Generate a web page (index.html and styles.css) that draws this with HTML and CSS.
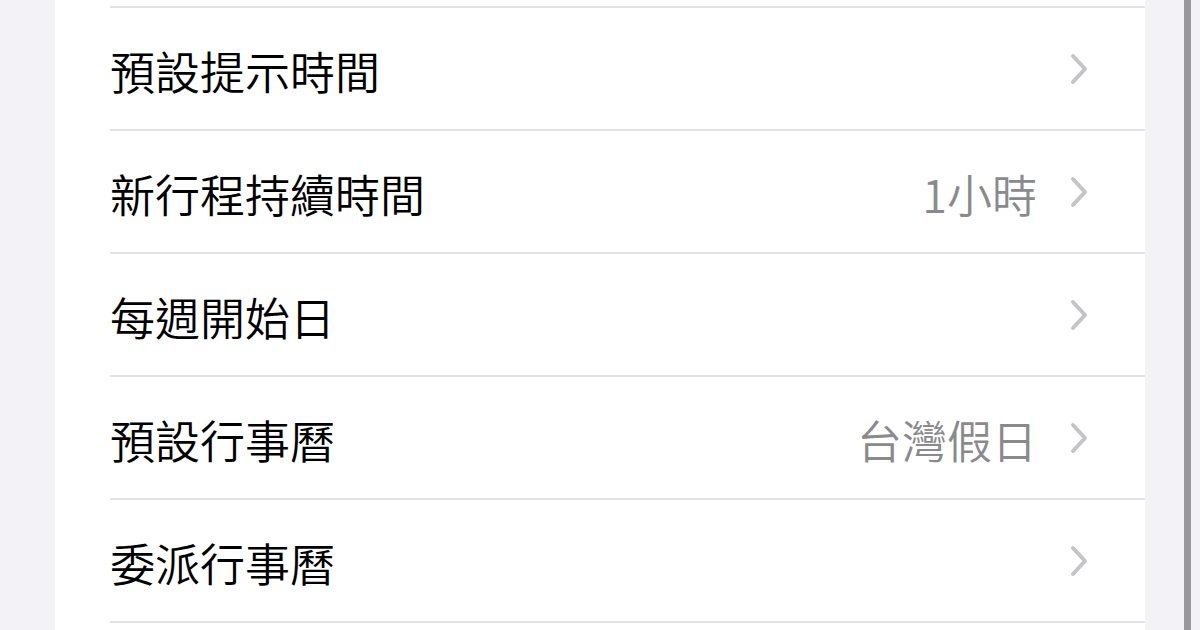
FILE: index.html
```html
<!DOCTYPE html>
<html lang="zh-Hant">
  <head>
    <meta charset="UTF-8" />
    <title>行事曆設定</title>
    <link rel="stylesheet" href="styles.css">
  </head>
  <body>
    <div class="page">
      <div class="card">
        <div class="row">
          <div class="row-inner">
            <span class="label">預設提示時間</span>
            <span class="value"></span>
            <svg class="chevron" viewBox="0 0 18 32"><path d="M3 3 L15 16 L3 29" /></svg>
          </div>
        </div>
        <div class="row">
          <div class="row-inner">
            <span class="label">新行程持續時間</span>
            <span class="value">1小時</span>
            <svg class="chevron" viewBox="0 0 18 32"><path d="M3 3 L15 16 L3 29" /></svg>
          </div>
        </div>
        <div class="row">
          <div class="row-inner">
            <span class="label">每週開始日</span>
            <span class="value"></span>
            <svg class="chevron" viewBox="0 0 18 32"><path d="M3 3 L15 16 L3 29" /></svg>
          </div>
        </div>
        <div class="row">
          <div class="row-inner">
            <span class="label">預設行事曆</span>
            <span class="value">台灣假日</span>
            <svg class="chevron" viewBox="0 0 18 32"><path d="M3 3 L15 16 L3 29" /></svg>
          </div>
        </div>
        <div class="row">
          <div class="row-inner">
            <span class="label">委派行事曆</span>
            <span class="value"></span>
            <svg class="chevron" viewBox="0 0 18 32"><path d="M3 3 L15 16 L3 29" /></svg>
          </div>
        </div>
        <div class="row">
          <div class="row-inner"></div>
        </div>
      </div>
    </div>
    <div class="scrollbar"></div>
  </body>
</html>
```

FILE: styles.css
```css
body {
  margin: 0;
  background-color: #f2f2f7;
  font-family: "Noto Sans CJK TC", "Noto Sans", sans-serif;
  height: 630px;
  overflow: hidden;
}
.page {
  padding-left: 55px;
}
.card {
  width: 1090px;
  background-color: #fff;
  padding-top: 6px;
  height: 624px;
  overflow: hidden;
}
.row {
  padding-left: 55px;
}
.row-inner {
  display: flex;
  align-items: center;
  height: 121px;
  border-top: 2px solid #e2e2e6;
  padding-right: 57px;
}
.label {
  flex: 1;
  font-size: 45px;
  font-weight: 350;
  line-height: 1;
  color: #000;
  padding-top: 4px;
}
.value {
  font-size: 45px;
  font-weight: 350;
  line-height: 1;
  color: #8a8a8e;
  margin-right: 33px;
  padding-top: 4px;
}
.chevron {
  width: 18px;
  height: 32px;
  fill: none;
  stroke: #c4c4c7;
  stroke-width: 4;
  stroke-linecap: round;
  stroke-linejoin: round;
}
.scrollbar {
  position: fixed;
  top: 0;
  left: 1184px;
  width: 7px;
  height: 630px;
  background-color: #98979c;
}
```
